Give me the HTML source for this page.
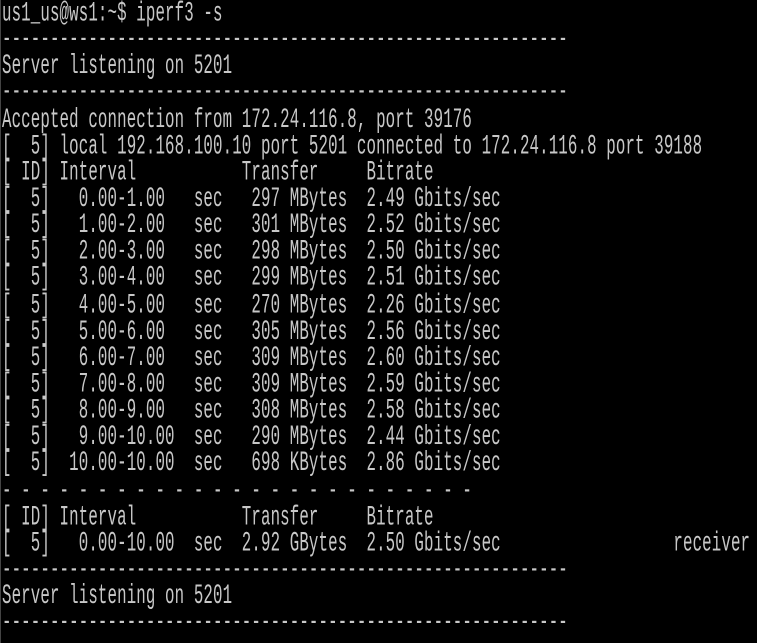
<!DOCTYPE html>
<html><head><meta charset="utf-8"><style>
html,body{margin:0;padding:0;background:#000;width:757px;height:643px;overflow:hidden}
pre{position:absolute;left:2px;top:1px;margin:0;font-family:"Liberation Mono",monospace;font-size:15.75px;letter-spacing:0.14px;line-height:15.14px;color:#c8c8c8;transform:scaleY(1.75);transform-origin:0 0;white-space:pre}
.b{position:absolute;left:0;top:0;width:1px;height:643px;background:#444}
</style></head><body><div class="b"></div><pre>us1_us@ws1:~$ iperf3 -s
-----------------------------------------------------------
Server listening on 5201
-----------------------------------------------------------
Accepted connection from 172.24.116.8, port 39176
[  5] local 192.168.100.10 port 5201 connected to 172.24.116.8 port 39188
[ ID] Interval           Transfer     Bitrate
[  5]   0.00-1.00   sec   297 MBytes  2.49 Gbits/sec
[  5]   1.00-2.00   sec   301 MBytes  2.52 Gbits/sec
[  5]   2.00-3.00   sec   298 MBytes  2.50 Gbits/sec
[  5]   3.00-4.00   sec   299 MBytes  2.51 Gbits/sec
[  5]   4.00-5.00   sec   270 MBytes  2.26 Gbits/sec
[  5]   5.00-6.00   sec   305 MBytes  2.56 Gbits/sec
[  5]   6.00-7.00   sec   309 MBytes  2.60 Gbits/sec
[  5]   7.00-8.00   sec   309 MBytes  2.59 Gbits/sec
[  5]   8.00-9.00   sec   308 MBytes  2.58 Gbits/sec
[  5]   9.00-10.00  sec   290 MBytes  2.44 Gbits/sec
[  5]  10.00-10.00  sec   698 KBytes  2.86 Gbits/sec
- - - - - - - - - - - - - - - - - - - - - - - - -
[ ID] Interval           Transfer     Bitrate
[  5]   0.00-10.00  sec  2.92 GBytes  2.50 Gbits/sec                  receiver
-----------------------------------------------------------
Server listening on 5201
-----------------------------------------------------------</pre></body></html>
